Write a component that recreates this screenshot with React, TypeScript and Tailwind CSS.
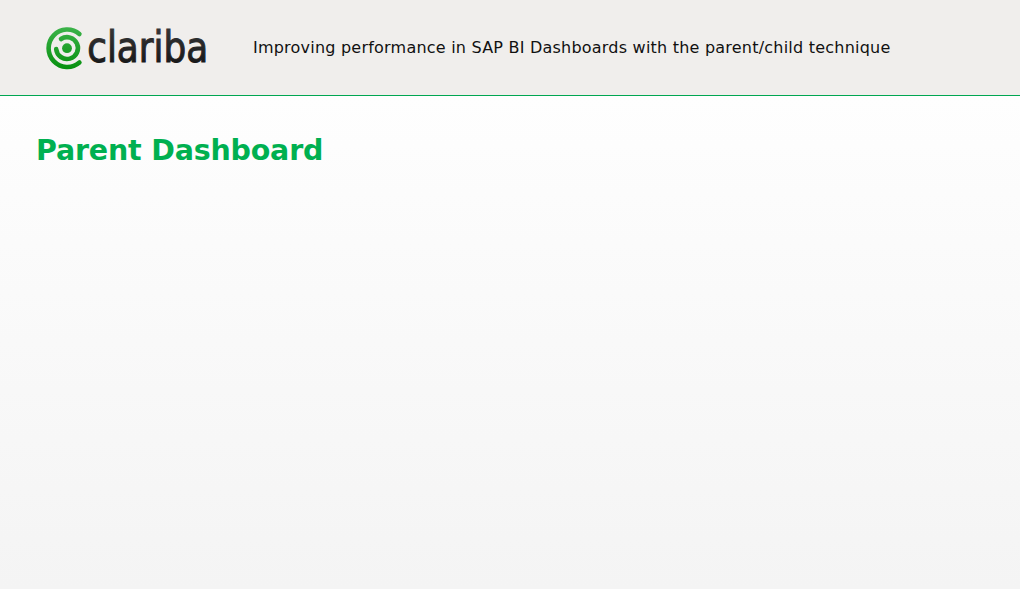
import type { ReactNode } from "react";

function ClaribaLogo() {
  return (
    <svg width="180" height="60" viewBox="0 -4 180 60" role="img" aria-label="clariba">
      <defs>
        <linearGradient id="mark" gradientUnits="userSpaceOnUse" x1="0" y1="5" x2="0" y2="47">
          <stop offset="0" stopColor="#3cb34a" />
          <stop offset="1" stopColor="#07900f" />
        </linearGradient>
        <linearGradient id="word" x1="0" y1="0" x2="0" y2="1">
          <stop offset="0" stopColor="#3a3a3b" />
          <stop offset="1" stopColor="#111112" />
        </linearGradient>
      </defs>

      {/* Target mark */}
      <g fill="none" stroke="url(#mark)" strokeWidth="4.6" strokeLinecap="round">
        <path d="M39.4 12A18.7 18.7 0 1 0 39.4 40.5" />
        <path d="M21 17A10.9 10.9 0 1 1 16.2 27.1" />
      </g>
      <circle cx="27" cy="26.2" r="4.9" fill="url(#mark)" />

      {/* Wordmark */}
      <text
        x="47.2"
        y="40.3"
        textLength="121"
        lengthAdjust="spacingAndGlyphs"
        fill="url(#word)"
        stroke="url(#word)"
        strokeWidth="1"
        className="font-['DejaVu_Sans_Condensed','DejaVu_Sans',sans-serif] text-[43.5px]"
      >
        clariba
      </text>
    </svg>
  );
}

function Header({ children }: { children: ReactNode }) {
  return (
    <header className="flex h-24 items-center border-b border-[#00a651] bg-[#f0eeec] pl-10">
      <ClaribaLogo />
      <p className="ml-[33px] whitespace-nowrap text-base tracking-[0.22px] text-[#111111]">
        {children}
      </p>
    </header>
  );
}

export default function App() {
  return (
    <div className="flex h-screen flex-col overflow-hidden font-['Verdana','DejaVu_Sans',sans-serif]">
      <Header>
        Improving performance in SAP BI Dashboards with the parent/child technique
      </Header>
      <main className="flex-1 bg-linear-to-b from-[#fefefe] to-[#f4f4f4] px-9 pt-[34px]">
        <h1 className="text-[28.5px] font-bold tracking-[-0.2px] text-[#00b050]">
          Parent Dashboard
        </h1>
      </main>
    </div>
  );
}
